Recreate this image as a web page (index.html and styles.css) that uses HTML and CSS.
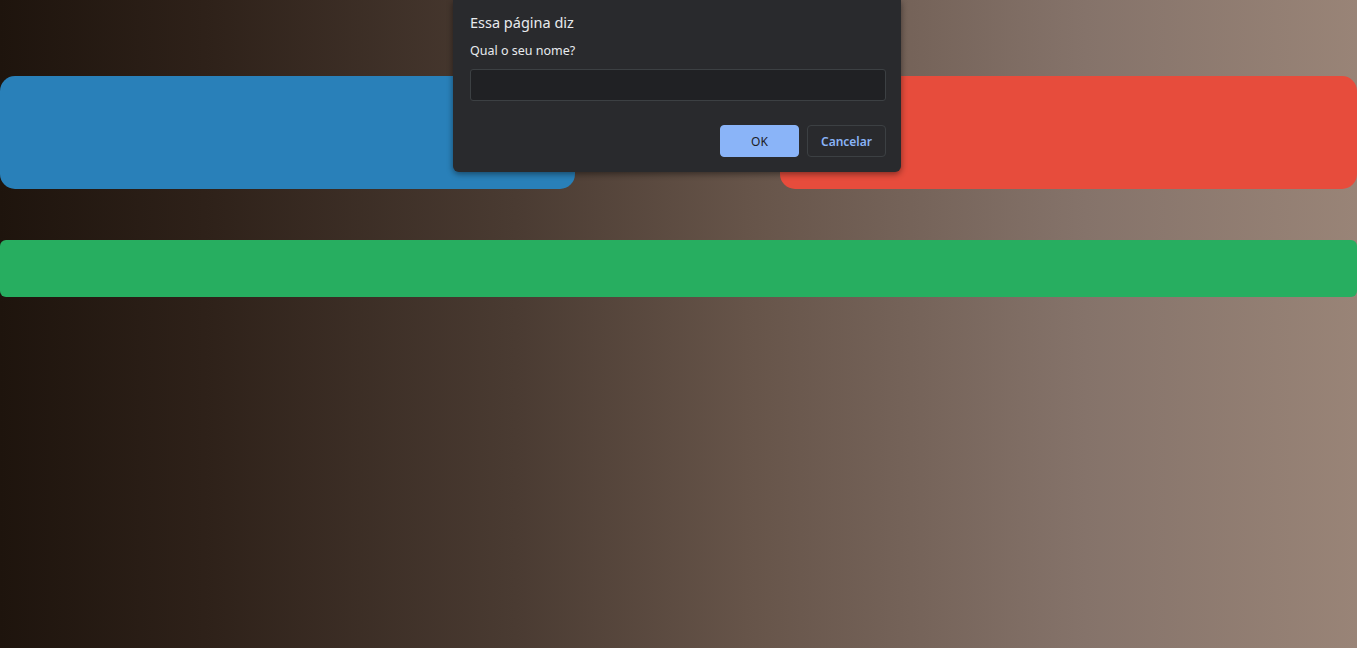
FILE: index.html
```html
<!DOCTYPE html>
<html lang="pt-BR">
<head>
<meta charset="utf-8">
<title>Prompt</title>
<link rel="stylesheet" href="styles.css">
</head>
<body>
<main class="page">
  <div class="row">
    <div class="box box-blue"></div>
    <div class="box box-red"></div>
  </div>
  <div class="bar bar-green"></div>
</main>
<div class="dialog" role="dialog">
  <div class="dialog-title">Essa página diz</div>
  <div class="dialog-msg">Qual o seu nome?</div>
  <input class="dialog-input" type="text">
  <div class="dialog-actions">
    <button class="btn btn-ok">OK</button>
    <button class="btn btn-cancel">Cancelar</button>
  </div>
</div>
</body>
</html>
```
FILE: styles.css
```css
html, body {
  margin: 0;
  height: 100%;
}
body {
  background: linear-gradient(to right, #1e140d 0%, #2e2119 15%, #4a3b32 38%, #665449 55%, #85736a 80%, #998477 100%);
  font-family: "Segoe UI", "Noto Sans", "Open Sans", sans-serif;
  overflow: hidden;
}
.page {
  padding-top: 76px;
}
.row {
  display: flex;
  justify-content: space-between;
}
.box {
  height: 113px;
  border-radius: 15px;
}
.box-blue {
  width: 575px;
  background: #2980b9;
}
.box-red {
  width: 577px;
  background: #e74c3c;
}
.bar {
  margin-top: 51px;
  height: 57px;
  border-radius: 6px;
}
.bar-green {
  background: #27ae60;
}
.dialog {
  position: absolute;
  top: 0;
  left: 453px;
  width: 448px;
  height: 172px;
  box-sizing: border-box;
  padding: 12px 15px 0 17px;
  background: #292a2d;
  border-radius: 0 0 6px 6px;
  box-shadow: 0 2px 6px rgba(0, 0, 0, 0.45);
}
.dialog-title {
  color: #e8eaed;
  font-size: 14.5px;
  line-height: 20px;
}
.dialog-msg {
  margin-top: 11px;
  color: #e8eaed;
  font-size: 12.5px;
  line-height: 16px;
}
.dialog-input {
  display: block;
  margin-top: 10px;
  width: 416px;
  height: 32px;
  box-sizing: border-box;
  background: #202124;
  border: 1px solid #3c4043;
  border-radius: 3px;
  outline: none;
}
.dialog-actions {
  display: flex;
  justify-content: flex-end;
  gap: 8px;
  margin-top: 24px;
}
.btn {
  width: 79px;
  height: 32px;
  box-sizing: border-box;
  border-radius: 4px;
  font-family: "Segoe UI", "Noto Sans", "Open Sans", sans-serif;
  font-size: 12px;
  padding: 0;
}
.btn-ok {
  background: #8ab4f8;
  border: 1px solid #8ab4f8;
  color: #202124;
}
.btn-cancel {
  background: transparent;
  border: 1px solid #3c4043;
  color: #8ab4f8;
  font-weight: 600;
}
```
